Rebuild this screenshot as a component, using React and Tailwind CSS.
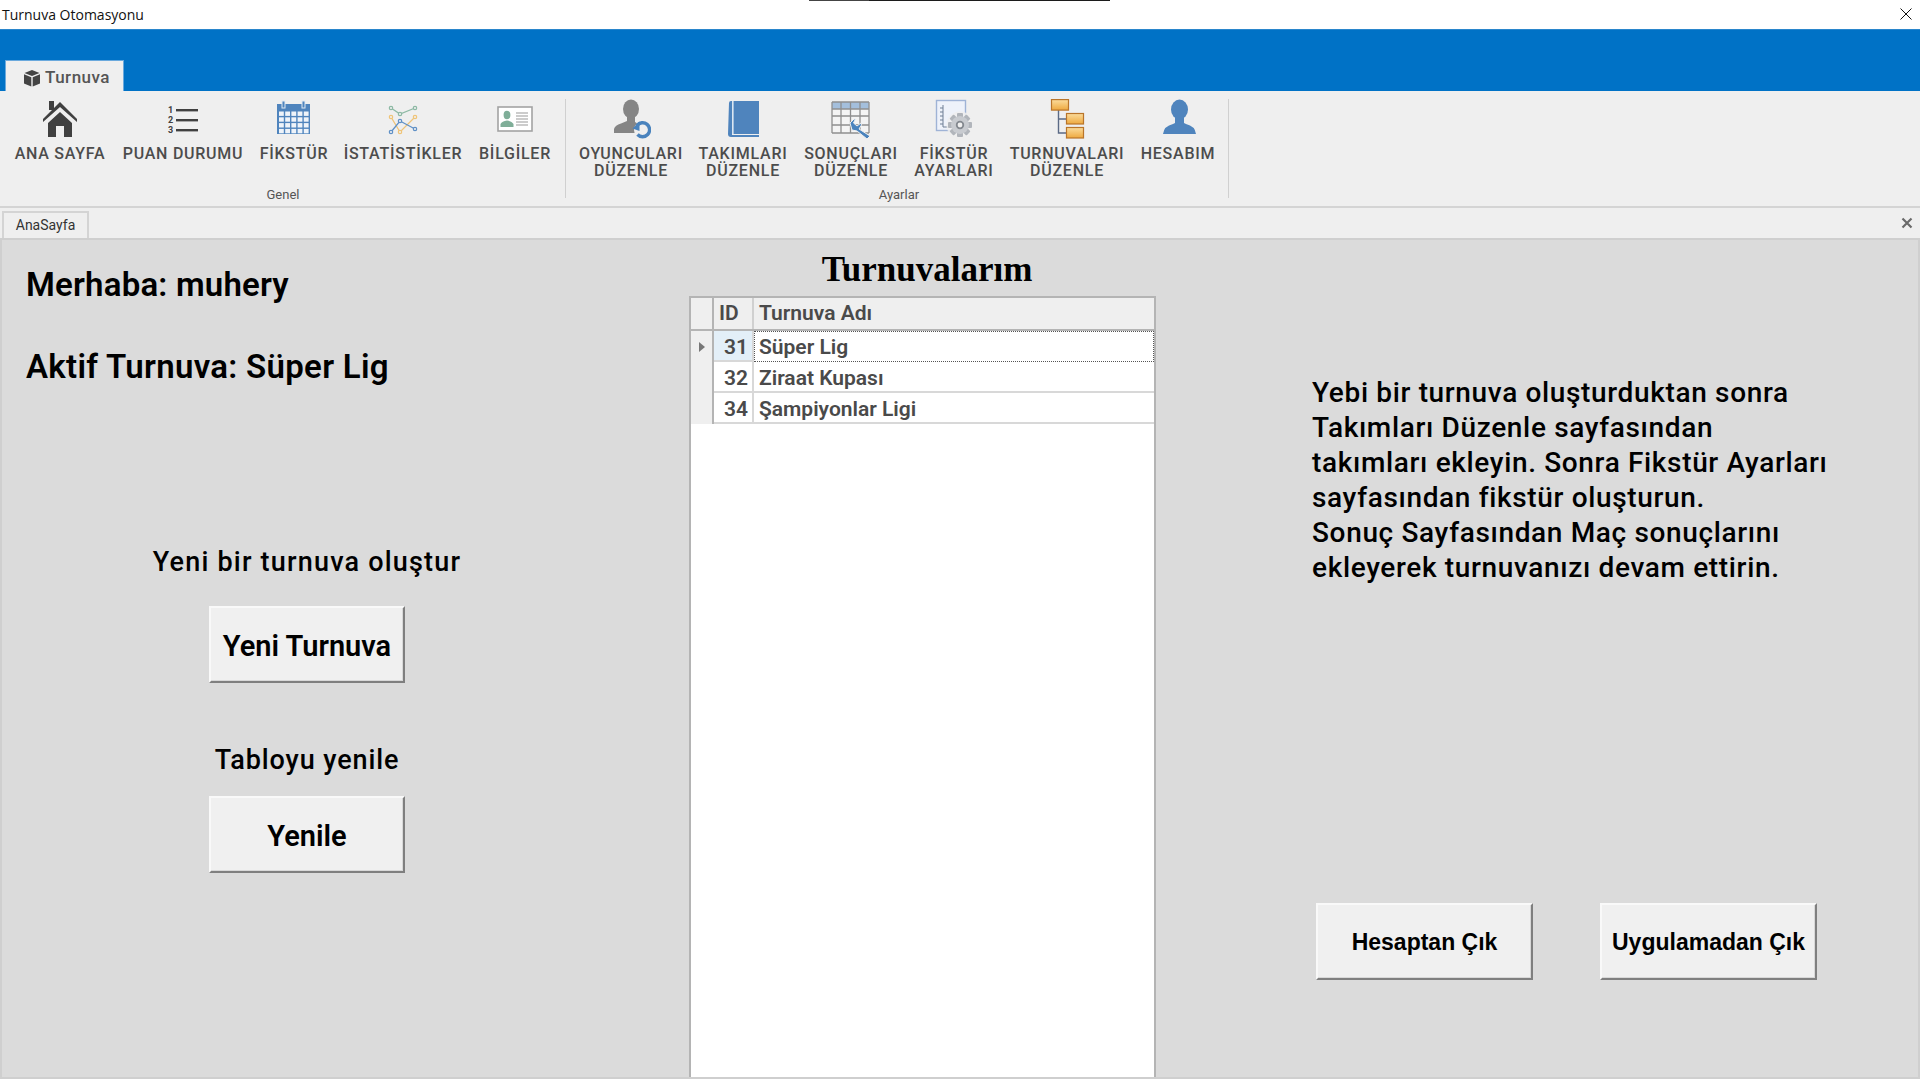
const din = "font-['Roboto',sans-serif]";

function HomeIcon() {
  return (
    <svg width="40" height="40" viewBox="0 0 40 40">
      <rect x="9" y="2" width="5" height="9" fill="#404040" />
      <path d="M3 20 L20 3 L37 20 L37 23 L20 8 L3 23 Z" fill="#404040" />
      <path d="M8 24 L20 13 L32 24 V38 H24 V27 H16 V38 H8 Z" fill="#404040" />
    </svg>
  );
}

function ListIcon() {
  return (
    <svg width="40" height="40" viewBox="0 0 40 40">
      {[1, 2, 3].map((n, i) => (
        <g key={n}>
          <text x="5" y={14 + i * 10} fontSize="9" fontWeight="700" fill="#404040" fontFamily="Roboto, sans-serif">{n}</text>
          <rect x="13" y={10 + i * 10} width="22" height="2.4" fill="#404040" />
        </g>
      ))}
    </svg>
  );
}

function CalendarIcon() {
  const cells = [];
  for (let r = 0; r < 4; r++) {
    for (let c = 0; c < 5; c++) {
      cells.push(<rect key={r + "-" + c} x={5 + c * 6.2} y={12.5 + r * 5.8} width="4.8" height="4.4" fill="#eef3f9" />);
    }
  }
  return (
    <svg width="40" height="40" viewBox="0 0 40 40">
      <rect x="3" y="5" width="33" height="30" fill="#4f84bd" />
      {cells}
      <rect x="8" y="2" width="3" height="7" fill="#4f84bd" stroke="#dfe8f2" strokeWidth="1" />
      <rect x="28" y="2" width="3" height="7" fill="#4f84bd" stroke="#dfe8f2" strokeWidth="1" />
    </svg>
  );
}

function Line({ pts, color }) {
  return (
    <g>
      <polyline points={pts.map((p) => p.join(",")).join(" ")} fill="none" stroke={color} strokeWidth="1.3" />
      {pts.map((p) => (
        <circle key={p.join()} cx={p[0]} cy={p[1]} r="1.7" fill="#efefef" stroke={color} strokeWidth="1.2" />
      ))}
    </g>
  );
}

function StatsIcon() {
  return (
    <svg width="40" height="40" viewBox="0 0 40 40">
      <Line pts={[[8, 9], [17, 15], [32, 9]]} color="#8db9a4" />
      <Line pts={[[8, 18], [17, 33], [32, 18]]} color="#efc478" />
      <Line pts={[[8, 33], [17, 22], [32, 30]]} color="#5f90c6" />
    </svg>
  );
}

function CardIcon() {
  return (
    <svg width="40" height="40" viewBox="0 0 40 40">
      <rect x="3" y="8" width="34" height="24" fill="#fff" stroke="#a3a3a3" strokeWidth="1.6" />
      <ellipse cx="12" cy="16" rx="3.4" ry="4.2" fill="#7fae98" />
      <path d="M5.5 28 V25 Q7 22 12 21.5 Q17 22 18.5 25 V28 Z" fill="#7fae98" />
      <path d="M21 14 H33 M21 17 H33 M21 20 H33 M21 23 H33 M21 26 H33" stroke="#9a9a9a" strokeWidth="1.2" />
    </svg>
  );
}

function PlayersIcon() {
  return (
    <svg width="40" height="40" viewBox="0 0 40 40">
      <ellipse cx="20" cy="10" rx="8" ry="9.5" fill="#858585" />
      <path d="M16 18 H24 V23 L29 26 L24 34 H3 V30 Q4 26 10 24.5 L16 22 Z" fill="#858585" />
      <circle cx="32" cy="31" r="9" fill="#efefef" />
      <path d="M26 26.5 A7 7 0 1 1 26.5 35.5" fill="none" stroke="#4a83bd" strokeWidth="3.4" />
      <path d="M21.5 29.5 L28.5 22.5 L28.5 32 Z" fill="#4a83bd" />
    </svg>
  );
}

function BookIcon() {
  return (
    <svg width="40" height="40" viewBox="0 0 40 40">
      <path d="M6 4 Q6 2 8 2 H36 V35 H9 V36 H36 V38 H8 Q5 38 5 35 Z" fill="#4f84bd" />
      <rect x="9" y="2" width="1.6" height="33" fill="#dbe6f1" />
    </svg>
  );
}

function TableWrenchIcon() {
  const v = [1, 10, 19.5, 29, 38];
  const h = [3, 10, 17, 26, 34];
  return (
    <svg width="40" height="40" viewBox="0 0 40 40">
      <rect x="1" y="3" width="37" height="7" fill="#a4bfdc" />
      <rect x="1" y="10" width="37" height="24" fill="#f4f4f4" />
      {v.map((x) => <line key={x} x1={x} x2={x} y1="3" y2="34" stroke="#8f8f8f" strokeWidth="1.3" />)}
      {h.map((y) => <line key={y} x1="1" x2="38" y1={y} y2={y} stroke="#8f8f8f" strokeWidth="1.3" />)}
      <path d="M19 24 L23 20 L24.5 20 L22.5 24 L26 27 L30 24 L30.5 26 L28 30 L39 37 L36 40 L26 32 L21 31 Z" fill="#4a83bd" stroke="#efefef" strokeWidth="1" strokeLinejoin="round" />
    </svg>
  );
}

function GearDocIcon() {
  const teeth = [0, 45, 90, 135];
  return (
    <svg width="40" height="40" viewBox="0 0 40 40">
      <rect x="2.5" y="1.5" width="29" height="30" fill="#eef2fa" stroke="#9fb3d6" strokeWidth="1.4" />
      <path d="M9 6 V28 H16 M6 9 H9 M6 13 H9 M6 17 H9 M6 21 H9 M6 25 H9" stroke="#6f7f95" strokeWidth="1" fill="none" />
      <circle cx="26" cy="26" r="13.5" fill="#efefef" opacity="0.85" />
      {teeth.map((a) => (
        <rect key={a} x="23" y="14" width="6" height="24" rx="1" fill="#b1b5bb" transform={"rotate(" + a + " 26 26)"} />
      ))}
      <circle cx="26" cy="26" r="9" fill="#c8cbd0" />
      <circle cx="26" cy="26" r="4.2" fill="#83888f" />
      <circle cx="26" cy="26" r="2.4" fill="#f0f0f0" />
    </svg>
  );
}

function TreeBox({ x, y }) {
  return <rect x={x} y={y} width="17" height="10.5" fill="url(#boxFill)" stroke="#b9752a" strokeWidth="1.2" />;
}

function TreeIcon() {
  return (
    <svg width="40" height="40" viewBox="0 0 40 40">
      <defs>
        <linearGradient id="boxFill" x1="0" y1="0" x2="0" y2="1">
          <stop offset="0" stopColor="#fbdc9c" />
          <stop offset="1" stopColor="#eea93f" />
        </linearGradient>
      </defs>
      <path d="M11.5 10 V34 H20 M11.5 20 H20" fill="none" stroke="#5b6a85" strokeWidth="1.4" />
      <TreeBox x={4.5} y={0.6} />
      <TreeBox x={19.5} y={14.5} />
      <TreeBox x={19.5} y={28.5} />
    </svg>
  );
}

function UserIcon() {
  return (
    <svg width="40" height="40" viewBox="0 0 40 40">
      <ellipse cx="21.5" cy="10.5" rx="8.5" ry="10" fill="#4f84bd" />
      <path d="M17 18 H26 V24 L28 25 Q37 27 38 35 H5 Q6 27 15 25 L17 24 Z" fill="#4f84bd" />
    </svg>
  );
}

const genel = [
  { w: "w-[108px]", icon: HomeIcon, label: ["ANA SAYFA"] },
  { w: "w-[138px]", icon: ListIcon, label: ["PUAN DURUMU"] },
  { w: "w-[84px]", icon: CalendarIcon, label: ["FİKSTÜR"] },
  { w: "w-[134px]", icon: StatsIcon, label: ["İSTATİSTİKLER"] },
  { w: "w-[90px]", icon: CardIcon, label: ["BİLGİLER"] },
];

const ayarlar = [
  { w: "w-[116px]", icon: PlayersIcon, label: ["OYUNCULARI", "DÜZENLE"] },
  { w: "w-[108px]", icon: BookIcon, label: ["TAKIMLARI", "DÜZENLE"] },
  { w: "w-[108px]", icon: TableWrenchIcon, label: ["SONUÇLARI", "DÜZENLE"] },
  { w: "w-[98px]", icon: GearDocIcon, label: ["FİKSTÜR", "AYARLARI"] },
  { w: "w-[128px]", icon: TreeIcon, label: ["TURNUVALARI", "DÜZENLE"] },
  { w: "w-[94px]", icon: UserIcon, label: ["HESABIM"] },
];

function RibbonItem({ item }) {
  const Icon = item.icon;
  return (
    <div className={`${item.w} flex flex-col items-center`}>
      <Icon />
      <div className="mt-[6px] text-center text-[16px] leading-[17px] font-medium tracking-[0.75px] text-[#4c4c4c] whitespace-nowrap">
        {item.label.map((l) => <div key={l}>{l}</div>)}
      </div>
    </div>
  );
}

function RibbonGroup({ title, items }) {
  return (
    <div className="flex flex-col justify-between h-full">
      <div className="flex">
        {items.map((it) => <RibbonItem key={it.label.join()} item={it} />)}
      </div>
      <div className="text-center text-[13px] leading-[16px] text-[#555] pb-[2px]">{title}</div>
    </div>
  );
}

function Separator({ className }) {
  return <div className={`w-[1px] h-[99px] bg-[#d0d0d0] ${className}`} />;
}

function WinButton({ className, children }) {
  return (
    <button className={`flex items-center justify-center bg-[#f0f0f0] border-2 border-t-[#f9f9f9] border-l-[#f9f9f9] border-r-[#7f7f7f] border-b-[#7f7f7f] shadow-[inset_-1px_-1px_0_#d8d8d8] text-black ${className}`}>
      {children}
    </button>
  );
}

const rows = [
  { id: 31, name: "Süper Lig", active: true },
  { id: 32, name: "Ziraat Kupası" },
  { id: 34, name: "Şampiyonlar Ligi" },
];

function TournamentGrid() {
  return (
    <div className="flex-1 bg-white border-2 border-b-0 border-[#b4b4b4] text-[21px] font-semibold text-[#4a4a4a]">
      <div className="flex h-[33px] bg-[#efefef] border-b-2 border-[#b4b4b4]">
        <div className="w-[23px] border-r-2 border-[#b4b4b4]" />
        <div className="w-[40px] border-r-2 border-[#d0d0d0] pl-[5px] leading-[31px]">ID</div>
        <div className="flex-1 pl-[5px] leading-[31px]">Turnuva Adı</div>
      </div>
      {rows.map((r) => (
        <div key={r.id} className="flex h-[31px]">
          <div className="w-[23px] bg-[#efefef] border-r-2 border-[#b4b4b4] flex items-center justify-center">
            {r.active && <div className="w-0 h-0 border-y-[5px] border-y-transparent border-l-[6px] border-l-[#777]" />}
          </div>
          <div className={`w-[40px] border-r-2 border-b-2 border-[#d8d8d8] pr-[4px] text-right leading-[32px] ${r.active ? "bg-[#e3eff8]" : ""}`}>{r.id}</div>
          {r.active ? (
            <div className="flex-1 pl-[4px] leading-[30px] border border-dotted border-[#555]">{r.name}</div>
          ) : (
            <div className="flex-1 pl-[5px] leading-[32px] border-b-2 border-[#d8d8d8]">{r.name}</div>
          )}
        </div>
      ))}
    </div>
  );
}

export default function App() {
  return (
    <div className={`relative h-[1080px] w-[1920px] overflow-hidden flex flex-col bg-white ${din}`}>
      <div className="absolute top-0 left-[809px] w-[301px] h-[1px] bg-[#1c1c1c]" />
      <div className="absolute top-0 left-[809px] w-[60px] h-[1px] bg-[#444]" />

      {/* title bar */}
      <div className="h-[29px] flex items-center justify-between pl-[2px] pr-[8px] bg-white">
        <span className="font-['Open_Sans',sans-serif] text-[14px] text-[#111]">Turnuva Otomasyonu</span>
        <svg width="12" height="12" viewBox="0 0 12 12" className="mb-[2px]">
          <path d="M0.5 0.5 L11.5 11.5 M11.5 0.5 L0.5 11.5" stroke="#111" strokeWidth="1" />
        </svg>
      </div>

      {/* blue band with tab */}
      <div className="h-[62px] bg-[#0072c6] border-t border-t-[#2a86cc] flex items-end pl-[5px]">
        <div className="w-[119px] h-[31px] bg-[#efefef] border-t border-x border-[#6aa9dd] border-b-0 flex items-center pl-[17px] pt-[3px] gap-[4px]">
          <svg width="18" height="18" viewBox="0 0 18 18">
            <path d="M9 1 L16.5 4 L9 7 L1.5 4 Z" fill="#444" />
            <path d="M1 5.2 L8.3 8.3 V17.5 L1 14.5 Z" fill="#444" />
            <path d="M17 5.2 L9.7 8.3 V17.5 L17 14.5 Z" fill="#444" />
          </svg>
          <span className="text-[17px] font-medium tracking-[0.5px] text-[#555]">Turnuva</span>
        </div>
      </div>

      {/* ribbon */}
      <div className="h-[117px] bg-[#efefef] flex items-start pt-[8px] pl-[6px] border-b-2 border-[#d4d4d4]">
        <div className="h-[106px] flex items-start">
          <RibbonGroup title="Genel" items={genel} />
          <Separator className="ml-[5px] mr-[7px]" />
          <RibbonGroup title="Ayarlar" items={ayarlar} />
          <Separator className="ml-[3px]" />
        </div>
      </div>

      {/* document tab strip */}
      <div className="h-[30px] bg-[#efefef] flex items-end justify-between pl-[2px] pr-[7px]">
        <div className="w-[87px] h-[27px] border-t-2 border-x-2 border-[#d4d4d4] text-center text-[14px] leading-[25px] text-[#333]">AnaSayfa</div>
        <svg width="12" height="12" viewBox="0 0 12 12" className="mb-[9px]">
          <path d="M1.5 1.5 L10.5 10.5 M10.5 1.5 L1.5 10.5" stroke="#6a6a6a" strokeWidth="2.2" />
        </svg>
      </div>

      {/* content */}
      <div className="flex-1 flex bg-[#dbdbdb] border-2 border-[#cfcfcf] mb-[1px]">
        <div className="w-[687px] pl-[24px] text-black">
          <div className="h-[40px] mt-[25px] text-[33px] leading-[40px] font-semibold tracking-[0.2px]">Merhaba: muhery</div>
          <div className="h-[40px] mt-[42px] text-[33px] leading-[40px] font-semibold tracking-[0.3px]">Aktif Turnuva: Süper Lig</div>
          <div className="w-[562px] flex flex-col items-center">
            <div className="mt-[157px] text-[27px] leading-[36px] font-medium tracking-[1.2px]">Yeni bir turnuva oluştur</div>
            <WinButton className="mt-[26px] w-[196px] h-[77px] pt-[4px] text-[29px] font-semibold">Yeni Turnuva</WinButton>
            <div className="mt-[59px] text-[27px] leading-[36px] font-medium tracking-[0.9px]">Tabloyu yenile</div>
            <WinButton className="mt-[18px] w-[196px] h-[77px] pt-[4px] text-[29px] font-semibold">Yenile</WinButton>
          </div>
        </div>

        <div className="w-[467px] flex flex-col">
          <div className="h-[56px] pt-[10px] pl-[9px] text-center font-['Liberation_Serif',serif] font-bold text-[35px] leading-[40px] text-black">Turnuvalarım</div>
          <TournamentGrid />
        </div>

        <div className="flex-1 pl-[156px] flex flex-col">
          <div className="mt-[135px] text-[28px] leading-[35px] font-medium tracking-[0.65px] text-black whitespace-nowrap">
            <div>Yebi bir turnuva oluşturduktan sonra</div>
            <div>Takımları Düzenle sayfasından</div>
            <div>takımları ekleyin. Sonra Fikstür Ayarları</div>
            <div>sayfasından fikstür oluşturun.</div>
            <div>Sonuç Sayfasından Maç sonuçlarını</div>
            <div>ekleyerek turnuvanızı devam ettirin.</div>
          </div>
          <div className="mt-[318px] pl-[4px] flex gap-[67px] font-['Liberation_Sans',sans-serif] font-bold text-[23px]">
            <WinButton className="w-[217px] h-[77px] pt-[2px]">Hesaptan Çık</WinButton>
            <WinButton className="w-[217px] h-[77px] pt-[2px]">Uygulamadan Çık</WinButton>
          </div>
        </div>
      </div>
    </div>
  );
}
